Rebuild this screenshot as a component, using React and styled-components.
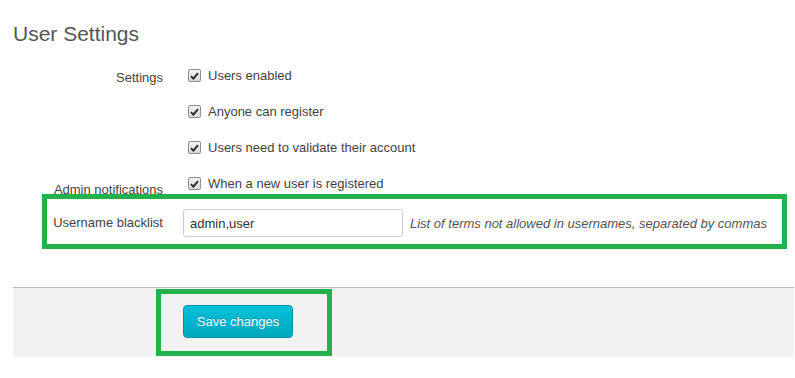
import React from 'react';
import styled, { createGlobalStyle } from 'styled-components';

const GlobalStyle = createGlobalStyle`
  body {
    margin: 0;
    background: #fff;
    font-family: "Liberation Sans", Arial, sans-serif;
    font-size: 13px;
    color: #444;
  }
`;

const Page = styled.div`
  padding: 0 1px 0 13px;
`;

const Title = styled.h2`
  margin: 22px 0 21px;
  font-size: 21px;
  line-height: 23px;
  font-weight: normal;
  color: #555;
`;

const Group = styled.div`
  display: grid;
  grid-template-columns: 150px 1fr;
  column-gap: 20px;
  align-items: start;
  margin-bottom: ${p => p.$after}px;
`;

const Label = styled.div`
  text-align: right;
  line-height: 20px;
  padding-top: ${p => p.$dy}px;
  margin-bottom: -${p => p.$dy}px;
  color: #444;
`;

const Checks = styled.div`
  display: flex;
  flex-direction: column;
  gap: 16px;
`;

const CheckRow = styled.label`
  display: flex;
  align-items: center;
  height: 20px;
  line-height: 20px;
  padding-left: 5px;
  gap: 7px;
  color: #444;
`;

const Box = styled.span`
  width: 11px;
  height: 11px;
  border: 1px solid #8e8e8e;
  border-radius: 2px;
  background: linear-gradient(#f4f4f4, #d8d8d8);
  display: flex;
  align-items: center;
  justify-content: center;
  margin-top: -1px;
`;

const Highlight = styled.div`
  display: grid;
  grid-template-columns: 116px 220px 1fr;
  column-gap: 20px;
  align-items: center;
  margin: 0 7px 38px 29px;
  padding: 10px 0 7px;
  border: 5px solid #22b14c;
`;

const FieldLabel = styled.div`
  text-align: right;
  line-height: 20px;
  color: #444;
`;

const Input = styled.input`
  box-sizing: border-box;
  width: 220px;
  height: 28px;
  padding: 0 6px;
  border: 1px solid #ccc;
  border-radius: 3px;
  font-family: inherit;
  font-size: 13px;
  color: #333;
  outline: none;
`;

const Help = styled.span`
  margin-left: -13px;
  font-style: italic;
  color: #555;
  white-space: nowrap;
`;

const Footer = styled.div`
  border-top: 1px solid #bbb;
  background: #f2f2f2;
  padding: 1px 0 1px 143px;
`;

const ButtonFrame = styled.div`
  width: 176px;
  box-sizing: border-box;
  border: 5px solid #22b14c;
  padding: 11px 0 13px 22px;
`;

const SaveButton = styled.button`
  width: 110px;
  height: 33px;
  border: 1px solid #0a8fa2;
  border-radius: 4px;
  background: linear-gradient(#00c2da, #00a7be);
  color: #fff;
  font-family: inherit;
  font-size: 13px;
  text-shadow: 0 -1px 0 rgba(0, 0, 0, 0.2);
  cursor: pointer;
  display: block;
`;

const Check = () => (
  <Box>
    <svg width="9" height="8" viewBox="0 0 9 8">
      <path d="M1 4.2 L3.4 6.6 L8 1.2" fill="none" stroke="#222" strokeWidth="1.8" />
    </svg>
  </Box>
);

const Checkbox = ({ children }) => (
  <CheckRow>
    <Check />
    {children}
  </CheckRow>
);

export default function App() {
  return (
    <Page>
      <GlobalStyle />
      <Title>User Settings</Title>
      <Group $after={16}>
        <Label $dy={2}>Settings</Label>
        <Checks>
          <Checkbox>Users enabled</Checkbox>
          <Checkbox>Anyone can register</Checkbox>
          <Checkbox>Users need to validate their account</Checkbox>
        </Checks>
      </Group>
      <Group $after={0}>
        <Label $dy={6}>Admin notifications</Label>
        <Checks>
          <Checkbox>When a new user is registered</Checkbox>
        </Checks>
      </Group>
      <Highlight>
        <FieldLabel>Username blacklist</FieldLabel>
        <Input defaultValue="admin,user" />
        <Help>List of terms not allowed in usernames, separated by commas</Help>
      </Highlight>
      <Footer>
        <ButtonFrame>
          <SaveButton>Save changes</SaveButton>
        </ButtonFrame>
      </Footer>
    </Page>
  );
}
